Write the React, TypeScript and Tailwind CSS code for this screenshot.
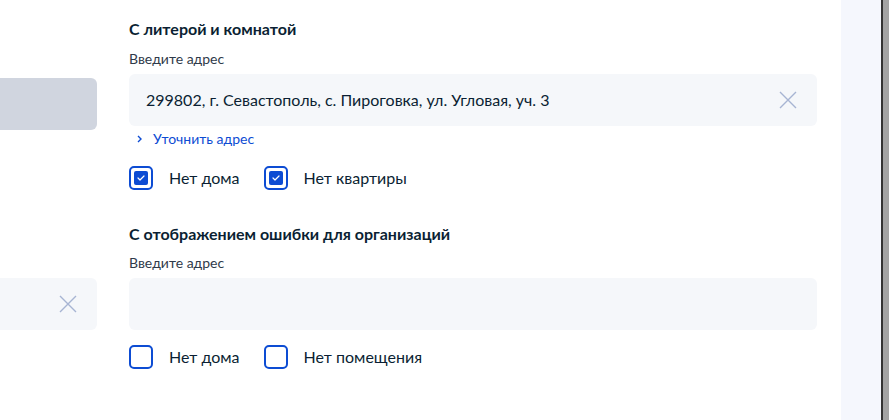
const font = { fontFamily: "Lato, 'Noto Sans', sans-serif" };

interface CheckProps {
    label: string;
    checked?: boolean;
}

const Check = ({ label, checked }: CheckProps) => (
    <label className="flex items-center">
        <span className="flex h-6 w-6 items-center justify-center rounded-[5px] border-2 border-[#0d4cd3] bg-white">
            {checked && (
                <span className="flex h-[14px] w-[14px] items-center justify-center rounded-[2px] bg-[#0d4cd3]">
                    <svg width="8" height="6" viewBox="0 0 8 6" fill="none">
                        <path d="M1 3l2 2 4-4" stroke="#fff" strokeWidth="1.2" strokeLinecap="round" strokeLinejoin="round" />
                    </svg>
                </span>
            )}
        </span>
        <span className="ml-4 text-[16px] leading-6 text-[#0b1f33]">{label}</span>
    </label>
);

const Cross = () => (
    <svg width="18" height="18" viewBox="0 0 18 18" fill="none">
        <path d="M1 1l16 16M17 1L1 17" stroke="#a7b4d3" strokeWidth="1.4" />
    </svg>
);

const AddressField = ({ value }: { value?: string }) => (
    <div className="mt-[6px] flex h-[52px] items-center rounded-md bg-[#f5f7fa] pl-[17px] pr-5">
        <div className="flex-1 text-[16px] text-[#0b1f33]">{value}</div>
        {value && <Cross />}
    </div>
);

export default function App() {
    return (
        <div className="flex h-[420px] w-[889px] overflow-hidden bg-white" style={font}>
            <div className="w-[97px] shrink-0">
                <div className="mt-[78px] h-[52px] rounded-r-md bg-[#d0d5df]" />
                <div className="mt-[148px] flex h-[52px] items-center justify-end rounded-r-md bg-[#f5f7fa] pr-5">
                    <Cross />
                </div>
            </div>

            <div className="ml-8 w-[688px] shrink-0">
                <h3 className="mt-[19px] text-[16px] font-bold leading-5 text-[#0b1f33]">С литерой и комнатой</h3>
                <div className="mt-[11px] text-[14px] leading-[18px] text-[#2f3a4a]">Введите адрес</div>
                <AddressField value="299802, г. Севастополь, с. Пироговка, ул. Угловая, уч. 3" />
                <div className="mt-1 flex items-center text-[14px] leading-[18px] text-[#0d4cd3]">
                    <svg className="ml-[8px] mr-[11px]" width="5" height="8" viewBox="0 0 5 8" fill="none">
                        <path d="M1 1l3 3-3 3" stroke="#0d4cd3" strokeWidth="1.4" />
                    </svg>
                    Уточнить адрес
                </div>
                <div className="mt-[18px] flex gap-6">
                    <Check label="Нет дома" checked />
                    <Check label="Нет квартиры" checked />
                </div>

                <h3 className="mt-[34px] text-[16px] font-bold leading-5 text-[#0b1f33]">С отображением ошибки для организаций</h3>
                <div className="mt-[10px] text-[14px] leading-[18px] text-[#2f3a4a]">Введите адрес</div>
                <AddressField />
                <div className="mt-[15px] flex gap-6">
                    <Check label="Нет дома" />
                    <Check label="Нет помещения" />
                </div>
            </div>

            <div className="ml-6 w-10 shrink-0 bg-[#f5f7fd]" />
            <div className="w-[2px] shrink-0 bg-[#333]" />
            <div className="w-[6px] shrink-0 bg-[#a3a3a3]" />
        </div>
    );
}
